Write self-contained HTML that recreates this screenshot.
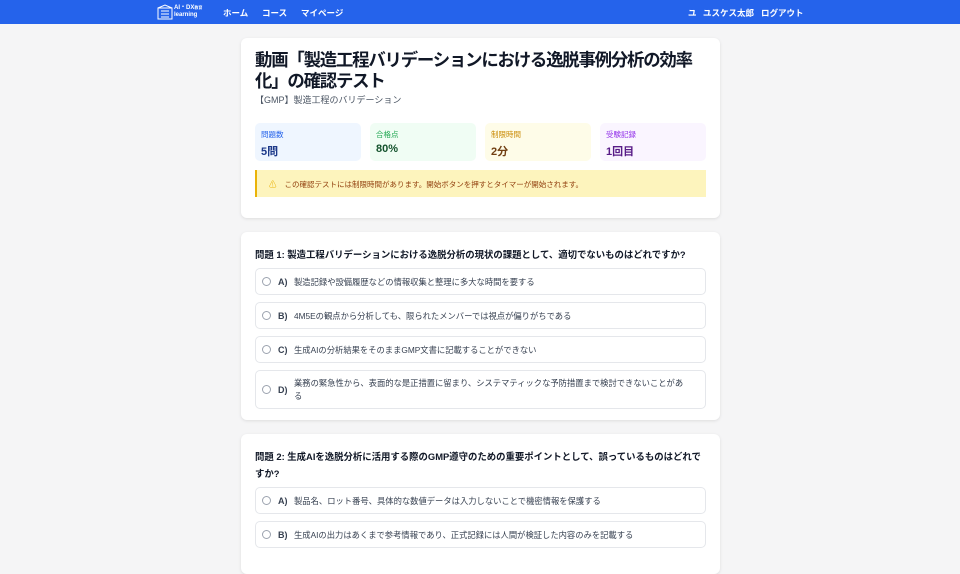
<!DOCTYPE html>
<html><head><meta charset="utf-8"><style>
*{box-sizing:border-box;margin:0;padding:0}
body{width:960px;height:544px;overflow:hidden;background:#f5f5f6;font-family:"Liberation Sans","Noto Sans CJK JP",sans-serif;color:#1f2937}
.nav{height:24px;background:#2563eb;color:#fff;font-size:8.5px;font-weight:bold;position:relative}
.nav span{position:absolute;top:7px}
.card{position:absolute;left:241px;width:479px;background:#fff;border-radius:6px;box-shadow:0 1px 3px rgba(0,0,0,.1);padding:14px;overflow:hidden}
h1{font-size:17.4px;line-height:21px;font-weight:bold;color:#111827;margin-top:-2px;letter-spacing:-1.2px;width:445px}
.sub{font-size:9px;color:#4b5563;margin-top:1px}
.stats{display:flex;gap:9px;margin-top:17px}
.st{flex:1;height:38px;border-radius:5px;padding:6px 6px;font-size:7.5px}
.st b{display:block;font-size:11px;margin-top:3px}
.warn{margin-top:9px;height:27px;background:#fdf4bd;border-left:2px solid #eab308;font-size:7.5px;color:#92400e;padding:9px 0 0 12px}
.q{font-size:9.4px;font-weight:bold;color:#111827;line-height:17px}
.opt{border:1px solid #e5e7eb;border-radius:5px;height:27px;margin-top:7px;display:flex;align-items:center;padding-left:6px;padding-right:14px;font-size:8.3px;color:#374151}
.r{width:9px;height:9px;border:1px solid #9ca3af;border-radius:50%;margin-right:7px;flex:none}
.l{width:16px;flex:none;font-weight:bold;font-size:9px}
</style></head><body>
<div class="nav">
<svg style="position:absolute;left:157px;top:4px" width="16" height="16" viewBox="0 0 16 16"><rect x="1" y="4" width="14" height="11" fill="none" stroke="#fff" stroke-width="1"/><path d="M1 4L8 1L15 4M4 7h8M4 10h8M4 13h8" stroke="#fff" fill="none" stroke-width="1"/></svg>
<span style="left:174px;top:4px;font-size:6px;line-height:7px">AI・DX<small style="font-size:4px">教育</small><br>learning</span>
<span style="left:223px">ホーム</span><span style="left:262px">コース</span><span style="left:301px">マイページ</span>
<span style="left:688px">ユ</span><span style="left:703px">ユスケス太郎</span><span style="left:761px">ログアウト</span>
</div>
<div class="card" style="top:38px;height:180px">
<h1>動画「製造工程バリデーションにおける逸脱事例分析の効率化」の確認テスト</h1>
<div class="sub">【GMP】製造工程のバリデーション</div>
<div class="stats">
<div class="st" style="background:#eff6ff;color:#2563eb">問題数<b style="color:#1e3a8a">5問</b></div>
<div class="st" style="background:#f0fdf4;color:#16a34a">合格点<b style="color:#14532d">80%</b></div>
<div class="st" style="background:#fefce8;color:#ca8a04">制限時間<b style="color:#713f12">2分</b></div>
<div class="st" style="background:#faf5ff;color:#9333ea">受験記録<b style="color:#581c87">1回目</b></div>
</div>
<div class="warn"><span style="color:#eab308;margin-right:8px">⚠</span>この確認テストには制限時間があります。開始ボタンを押すとタイマーが開始されます。</div>
</div>
<div class="card" style="top:232px;height:188px">
<div class="q" style="margin-top:0">問題 1: 製造工程バリデーションにおける逸脱分析の現状の課題として、適切でないものはどれですか?</div>
<div class="opt" style="margin-top:5px"><div class="r"></div><div class="l">A)</div>製造記録や設備履歴などの情報収集と整理に多大な時間を要する</div>
<div class="opt"><div class="r"></div><div class="l">B)</div>4M5Eの観点から分析しても、限られたメンバーでは視点が偏りがちである</div>
<div class="opt"><div class="r"></div><div class="l">C)</div>生成AIの分析結果をそのままGMP文書に記載することができない</div>
<div class="opt" style="height:39px"><div class="r"></div><div class="l">D)</div><div style="line-height:13px">業務の緊急性から、表面的な是正措置に留まり、システマティックな予防措置まで検討できないことがある</div></div>
</div>
<div class="card" style="top:434px;height:140px">
<div class="q" style="margin-top:0">問題 2: 生成AIを逸脱分析に活用する際のGMP遵守のための重要ポイントとして、誤っているものはどれですか?</div>
<div class="opt" style="margin-top:5px"><div class="r"></div><div class="l">A)</div>製品名、ロット番号、具体的な数値データは入力しないことで機密情報を保護する</div>
<div class="opt"><div class="r"></div><div class="l">B)</div>生成AIの出力はあくまで参考情報であり、正式記録には人間が検証した内容のみを記載する</div>
</div>
</body></html>
